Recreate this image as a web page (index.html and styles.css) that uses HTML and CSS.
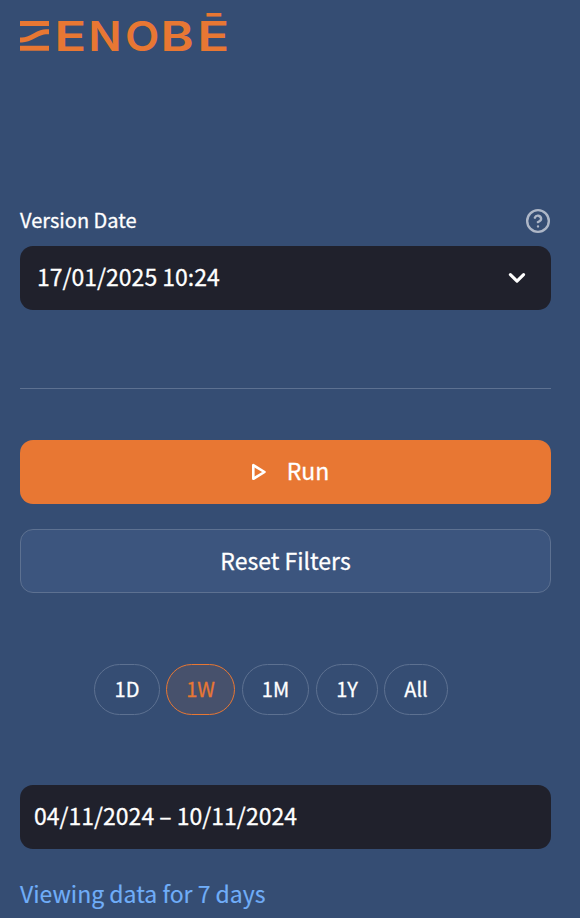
FILE: index.html
```html
<!DOCTYPE html>
<html lang="en">
<head>
<meta charset="utf-8">
<title>Zenobē</title>
<link rel="stylesheet" href="styles.css">
</head>
<body>
<main class="sidebar">
  <svg class="logo" width="208" height="42" viewBox="0 0 208 42" role="img" aria-label="Zenobē">
    <path d="M0 8H29V13H0ZM0 32.8H29V37.8H0Z"/>
    <path class="wave" d="M0 26.9H2C12 26.9 17 18.8 26 18.8H29"/>
    <g class="wordmark">
      <text transform="translate(34.2 37.8) scale(1.29 1)">E</text>
      <text transform="translate(68.5 37.8) scale(1.06 1)">N</text>
      <text transform="translate(104.9 37.8) scale(1.09 1)">O</text>
      <text transform="translate(140.5 37.8) scale(1.23 1)">B</text>
      <text transform="translate(177.3 37.8) scale(1.29 1)">Ē</text>
    </g>
  </svg>

  <div class="label-row">
    <span class="label">Version Date</span>
    <svg class="help" width="26" height="26" viewBox="0 0 24 24"><circle cx="12" cy="12" r="10"/><path d="M9.1 9a3 3 0 0 1 5.8 1c0 2-3 3-3 3M12 17h.01"/></svg>
  </div>
  <div class="field select">
    <span>17/01/2025 10:24</span>
    <svg class="chevron" width="18" height="12" viewBox="0 0 18 12"><path d="M2.4 2.7L9 9.2L15.6 2.7"/></svg>
  </div>

  <hr class="divider">

  <button class="button primary">
    <svg class="play" width="16" height="18" viewBox="0 0 16 18"><path d="M2.3 2.2V15.8L13.5 9Z"/></svg>
    <span>Run</span>
  </button>
  <button class="button secondary"><span>Reset Filters</span></button>

  <div class="pills">
    <button class="pill day">1D</button>
    <button class="pill week active">1W</button>
    <button class="pill month">1M</button>
    <button class="pill year">1Y</button>
    <button class="pill all">All</button>
  </div>

  <div class="field range"><span>04/11/2024 – 10/11/2024</span></div>
  <p class="info">Viewing data for 7 days</p>
</main>
</body>
</html>
```
FILE: styles.css
```css
* { box-sizing: border-box; }
body {
  margin: 0;
  height: 918px;
  overflow: hidden;
  background: #354d73;
  color: #fff;
  font-family: "Noto Sans CJK SC", "Noto Sans", sans-serif;
  font-size: 23px;
  -webkit-text-stroke: 0.28px currentColor;
}
button { font: inherit; color: inherit; padding: 0; }
.sidebar {
  display: flex;
  flex-direction: column;
  padding: 13px 29px 0 20px;
}
.logo { display: block; fill: #e87733; overflow: visible; }
.wave { fill: none; stroke: #e87733; stroke-width: 5; }
.wordmark { font: 600 41px Inter, sans-serif; -webkit-text-stroke: 0; }
.label-row {
  display: flex;
  align-items: center;
  justify-content: space-between;
  height: 32px;
  margin-top: 150px;
}
.label { font-size: 20px; line-height: 32px; padding-bottom: 2px; }
.help {
  fill: none;
  stroke: #aeb7c7;
  stroke-width: 2.2;
  stroke-linecap: round;
  stroke-linejoin: round;
}
.field {
  display: flex;
  align-items: center;
  height: 64px;
  border-radius: 13px;
  background: #20212c;
}
.field span, .primary span { padding-bottom: 4px; }
.secondary span { padding-bottom: 3px; }
.select { justify-content: space-between; margin-top: 9px; padding: 0 25px 0 17px; }
.chevron { fill: none; stroke: #fff; stroke-width: 3.1; stroke-linecap: round; stroke-linejoin: round; }
.divider { width: 100%; height: 1px; margin: 78px 0 51px; border: 0; background: #5d7191; }
.button {
  display: flex;
  align-items: center;
  justify-content: center;
  height: 64px;
  border-radius: 13px;
}
.primary { gap: 20px; padding-left: 9px; border: 0; background: #e87733; }
.play { fill: none; stroke: #fff; stroke-width: 2.6; stroke-linejoin: round; }
.secondary { margin-top: 25px; border: 1px solid #5d7191; background: #3c557e; }
.pills { display: flex; gap: 6px; margin: 71px 0 0 74px; }
.pill {
  height: 51px;
  padding-bottom: 2px;
  border: 1px solid #5d7191;
  border-radius: 26px;
  background: transparent;
  font-size: 20px;
}
.day { width: 66px; }
.week { width: 69px; }
.month { width: 67px; margin-left: 1px; }
.year { width: 62px; margin-left: 1px; }
.all { width: 64px; }
.active { border-color: #e87733; background: #47516c; color: #e87733; }
.range { margin-top: 70px; padding-left: 14px; }
.info { margin: 27px 0 0; color: #70adf8; line-height: 34px; -webkit-text-stroke-width: 0.15px; }
```
